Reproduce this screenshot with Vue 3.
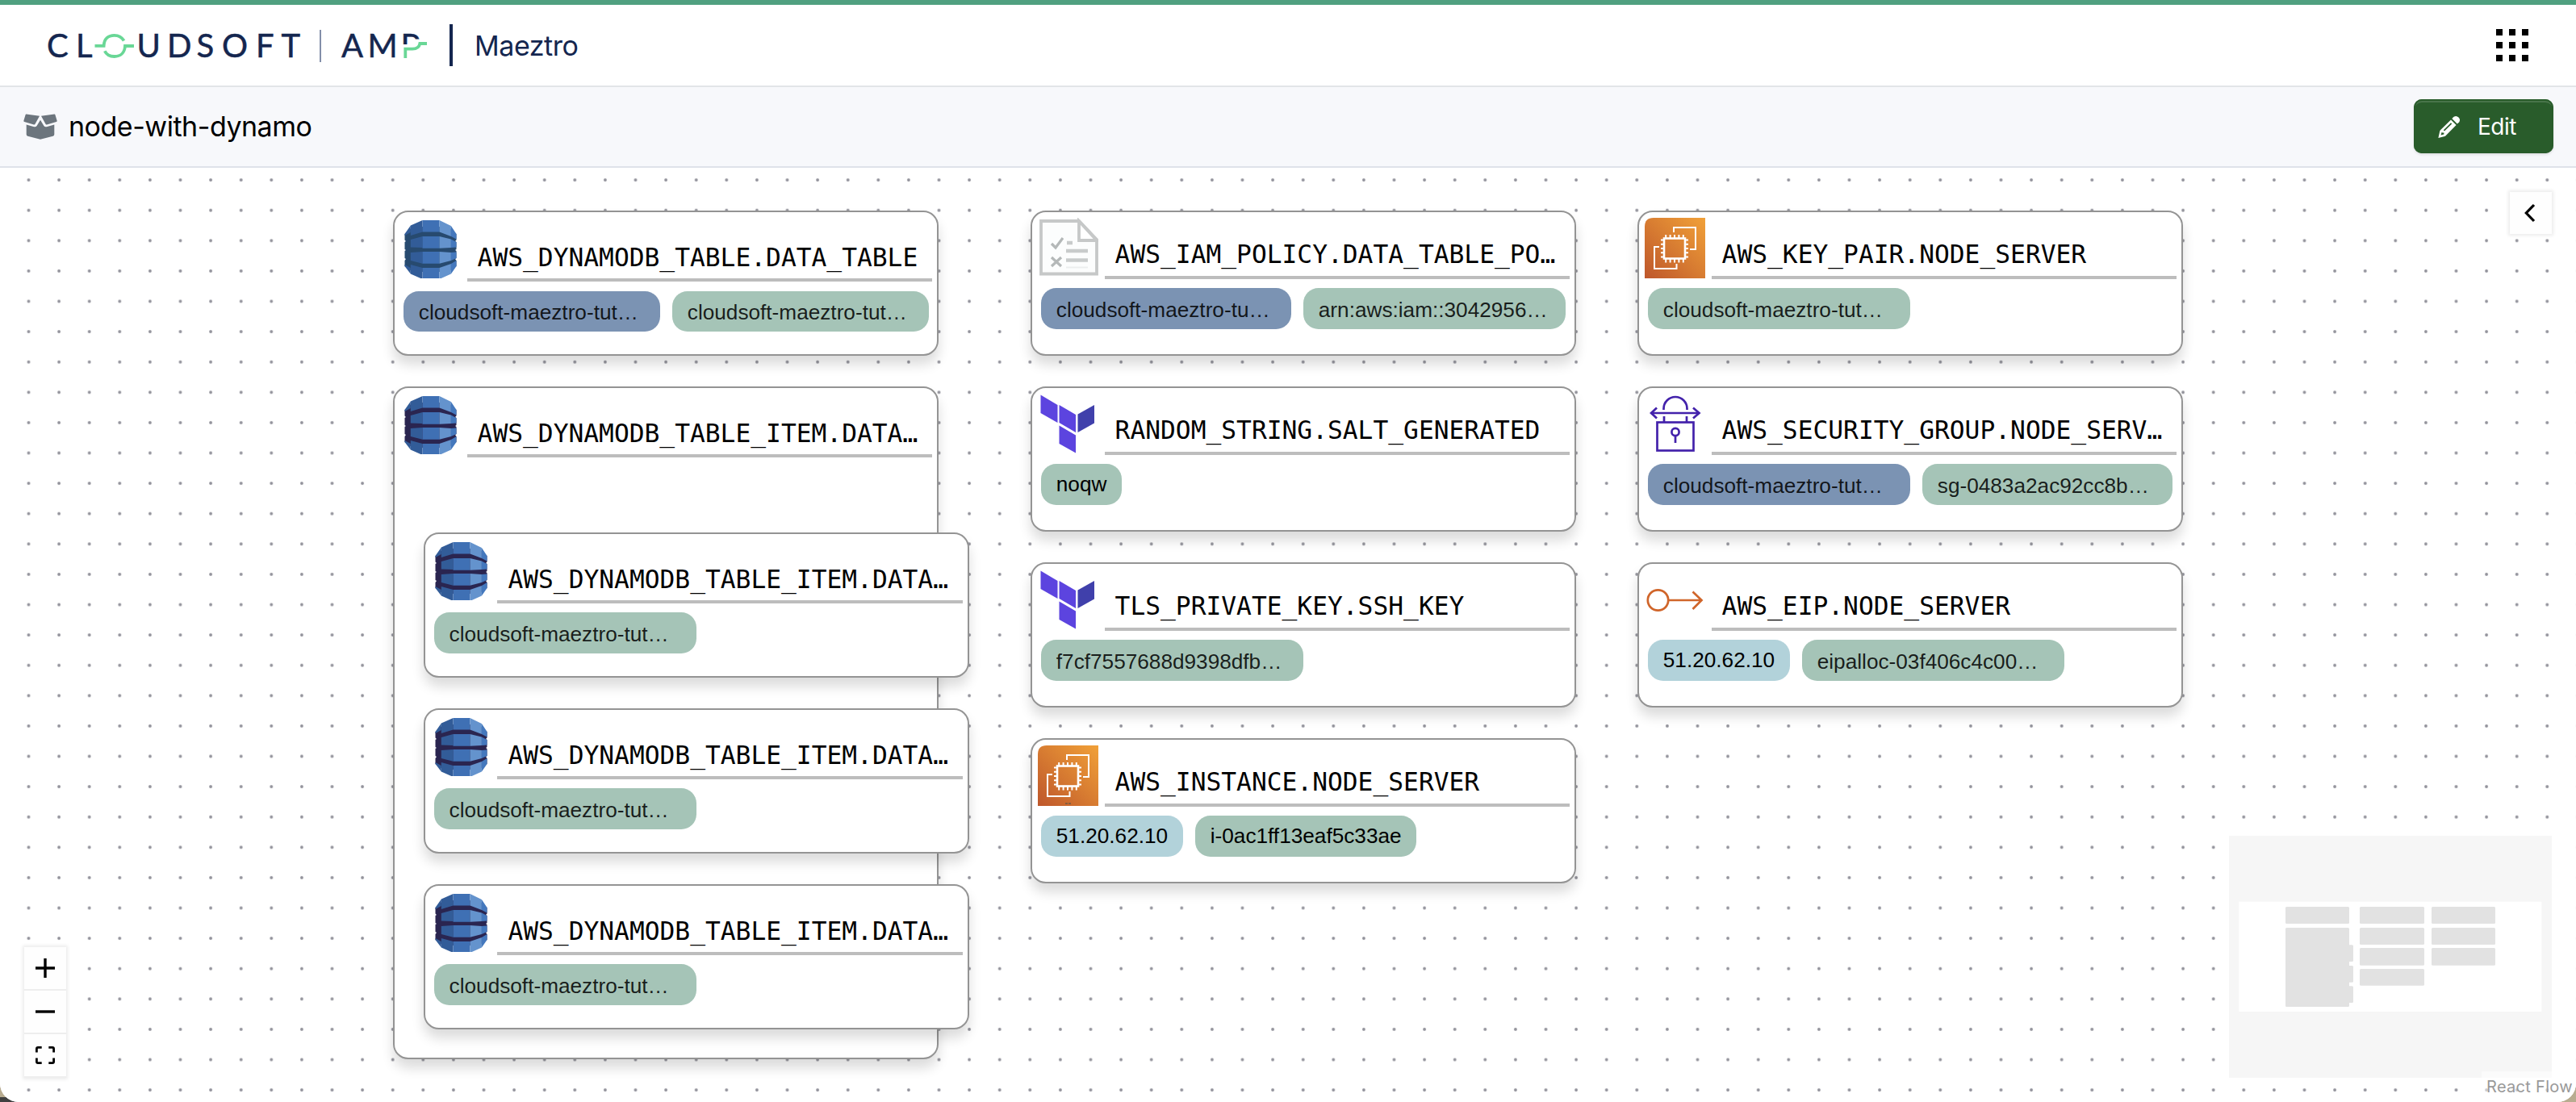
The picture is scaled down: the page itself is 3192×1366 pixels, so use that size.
<script setup>
const nodes = [
  { id: 'table', x: 487, y: 53, icon: 'dynamo', dark: '#274a6f', low: true, title: 'AWS_DYNAMODB_TABLE.DATA_TABLE',
    pills: [{ t: 'cloudsoft-maeztro-tut…', c: 'blue', w: 318, cut: true }, { t: 'cloudsoft-maeztro-tut…', c: 'green', w: 317.5, cut: true }] },
  { id: 'items', x: 487, y: 271, h: 834, icon: 'dynamo', dark: '#2a2550', low: true, title: 'AWS_DYNAMODB_TABLE_ITEM.DATA…', pills: [] },
  { id: 'item1', x: 524.8, y: 451.5, icon: 'dynamo', dark: '#2a2550', low: true, title: 'AWS_DYNAMODB_TABLE_ITEM.DATA…',
    pills: [{ t: 'cloudsoft-maeztro-tut…', c: 'green', w: 325, cut: true }] },
  { id: 'item2', x: 524.8, y: 669.5, icon: 'dynamo', dark: '#2a2550', low: true, title: 'AWS_DYNAMODB_TABLE_ITEM.DATA…',
    pills: [{ t: 'cloudsoft-maeztro-tut…', c: 'green', w: 325, cut: true }] },
  { id: 'item3', x: 524.8, y: 887.5, icon: 'dynamo', dark: '#2a2550', low: true, title: 'AWS_DYNAMODB_TABLE_ITEM.DATA…',
    pills: [{ t: 'cloudsoft-maeztro-tut…', c: 'green', w: 325, cut: true }] },
  { id: 'policy', x: 1277, y: 53, icon: 'policy', title: 'AWS_IAM_POLICY.DATA_TABLE_PO…',
    pills: [{ t: 'cloudsoft-maeztro-tu…', c: 'blue', w: 310, cut: true }, { t: 'arn:aws:iam::3042956…', c: 'green', w: 325, cut: true }] },
  { id: 'random', x: 1277, y: 271, icon: 'terraform', title: 'RANDOM_STRING.SALT_GENERATED', pills: [{ t: 'noqw', c: 'green' }] },
  { id: 'tls', x: 1277, y: 489, icon: 'terraform', title: 'TLS_PRIVATE_KEY.SSH_KEY',
    pills: [{ t: 'f7cf7557688d9398dfb…', c: 'green', w: 325, cut: true }] },
  { id: 'instance', x: 1277, y: 707, icon: 'ec2', title: 'AWS_INSTANCE.NODE_SERVER',
    pills: [{ t: '51.20.62.10', c: 'sky' }, { t: 'i-0ac1ff13eaf5c33ae', c: 'green' }] },
  { id: 'keypair', x: 2029, y: 53, icon: 'ec2', title: 'AWS_KEY_PAIR.NODE_SERVER',
    pills: [{ t: 'cloudsoft-maeztro-tut…', c: 'green', w: 325, cut: true }] },
  { id: 'secgroup', x: 2029, y: 271, icon: 'lock', title: 'AWS_SECURITY_GROUP.NODE_SERV…',
    pills: [{ t: 'cloudsoft-maeztro-tut…', c: 'blue', w: 325, cut: true }, { t: 'sg-0483a2ac92cc8b…', c: 'green', w: 310, cut: true }] },
  { id: 'eip', x: 2029, y: 489, icon: 'eip', title: 'AWS_EIP.NODE_SERVER',
    pills: [{ t: '51.20.62.10', c: 'sky' }, { t: 'eipalloc-03f406c4c00…', c: 'green', w: 325, cut: true }] },
]

const miniNodes = [
  [70, 88, 79, 21], [70, 114, 79, 98], [75, 135.3, 79, 20.7], [75, 161, 79, 20.7], [75, 186.3, 79, 20.7],
  [162, 88, 80, 21], [162, 114, 80, 21], [162, 139, 80, 21.7], [162, 165, 80, 20.7],
  [251, 88, 79, 21], [251, 114, 79, 21], [251, 139, 79, 21.7],
]
</script>

<template>
  <div class="window">
    <div class="app">
      <header class="topbar">
        <svg class="logo" width="504" height="60" viewBox="50 26 504 60">
          <defs>
            <clipPath id="p-top"><path d="M498 38H524V48.500H506V55H498Z" /></clipPath>
          </defs>
          <g fill="#14264f" stroke="#14264f" stroke-width=".5" font-family="Lato, sans-serif" font-size="40">
            <text y="71.3" x="58 94">CL</text>
            <text y="71.3" x="169.500 207 243.500 275 317 348.500">UDSOFT</text>
            <text y="71.3" x="423 455.500">AM</text>
            <text y="71.3" x="496.500" clip-path="url(#p-top)">P</text>
          </g>
          <g fill="none" stroke="#69d796" stroke-width="3.800">
            <path d="M117.500 56.800H128.600C129 48 134.500 43.800 141.700 43.800C147 43.800 151 46 153.600 50.500" />
            <path d="M166 57H155C154.500 65.500 149 70 141.700 70C136 70 131.800 67.500 129.800 63.200" />
            <path d="M502.300 72V60.700H511C517 60.700 519.500 58.500 520.300 54H529" />
          </g>
          <path d="M397 37V77" stroke="#7583a0" stroke-width="1.800" />
        </svg>
        <div class="brand-rule"></div>
        <span class="brand">Maeztro</span>
        <svg class="apps" width="40" height="40" viewBox="0 0 40 40">
          <path d="M0 0h8v8H0zM16 0h8v8h-8zM32 0h8v8h-8zM0 16h8v8H0zM16 16h8v8h-8zM32 16h8v8h-8zM0 32h8v8H0zM16 32h8v8h-8zM32 32h8v8h-8z" />
        </svg>
      </header>

      <div class="subbar">
        <svg class="box" width="42" height="32" viewBox="0 0 42 32" fill="#6c757d">
          <path d="M3.500 .5L20 2.700L14.500 12.800Q14 13.700 13 13.400L1.200 10Q0 9.600 .4 8.400L2.600 1.200Q2.900 .4 3.500 .5Z" />
          <path d="M38.500 .5L22 2.700L27.500 12.800Q28 13.700 29 13.400L40.800 10Q42 9.600 41.600 8.400L39.400 1.200Q39.100 .4 38.500 .5Z" />
          <path d="M3.700 13.500L13.300 16.200Q15.400 16.700 16.600 14.900L21 7.700L25.400 14.900Q26.600 16.700 28.700 16.200L38.300 13.500V25.500Q38.300 27.300 36.600 27.800L22 31.500Q21 31.800 20 31.500L5.400 27.800Q3.700 27.300 3.700 25.500Z" />
        </svg>
        <span class="doc-title">node-with-dynamo</span>
        <button class="edit">
          <svg width="28" height="28" viewBox="0 0 28 28" fill="#fff">
            <path d="M19.600 1.800a4.800 4.800 0 0 1 6.600 6.600l-2.400 2.200-6.500-6.500Z" />
            <path fill-rule="evenodd" d="M16 5.400l6.600 6.600L9.500 25.200Q9 25.700 8.300 25.900L.4 28L2.200 19.700Q2.400 18.900 3 18.300ZM16 9.200L6.800 18.300L8 19.500L17.200 10.400ZM4.700 20.700L3.500 24.600L7.400 23.600V21.500H5.600Z" />
          </svg>
          <span>Edit</span>
        </button>
      </div>

      <main class="canvas">
        <svg class="dots" width="100%" height="100%">
          <defs>
            <pattern id="grid" x="16.700" y="-3.700" width="37.600" height="37.600" patternUnits="userSpaceOnUse">
              <circle cx="18.800" cy="18.800" r="1.900" fill="#91919a" />
            </pattern>
          </defs>
          <rect width="100%" height="100%" fill="url(#grid)" />
        </svg>

        <article v-for="n in nodes" :key="n.id" class="node" :class="{ low: n.low }"
          :style="{ left: n.x + 'px', top: n.y + 'px', height: (n.h || 180) + 'px' }">
          <div class="head">
            <svg class="icon" width="75" height="75" viewBox="0 0 75 75">
              <g v-if="n.icon === 'dynamo'" transform="translate(5.500 3)">
                <path :fill="n.dark" d="M0 17L10 8H54L64 17V24.500L62.500 26L64 27V36L62.500 37L64 38V47L62.500 48L64 50V57L54 64H10L0 57V50L1.500 48L0 47V38L1.500 37L0 36V27L1.500 26L0 24.500Z" />
                <path fill="#325c98" d="M22 0V14.500L7.300 19V6.500ZM7.300 24L22 20V34L7.300 33.500ZM7.300 40L22 39V53.700L7.300 50ZM7.300 55L22 59V73L7.300 66.500Z" />
                <path fill="#3f70b4" d="M22 0H43V14.500H22ZM22 20H43V34.700H22ZM22 39H43V53.700H22ZM22 59H43V73H22Z" />
                <path fill="#6493cd" d="M43 0L57.400 7V20L43 14.500ZM43 20L57.400 23.500V34L43 34.700ZM43 39L57.400 40V50L43 53.700ZM43 59L57.400 54V66.500L43 73Z" />
                <path fill="#4478bd" d="M57.400 7L64 17V23.500L57.400 20ZM57.400 23.500L64 27V33.500L57.400 34ZM57.400 40L64 39.500V47L57.400 50ZM57.400 54L64 50V57L57.400 66.500Z" />
                <path fill="#325c98" d="M7.300 6.500L0 17V19L7.300 15ZM7.300 66.500L0 57V55L7.300 59Z" />
              </g>

              <g v-else-if="n.icon === 'policy'" fill="none" stroke="#c6c8c8" stroke-width="3.800">
                <path fill="#fcfdfd" d="M4 4H51L73 27V69.500H4Z" />
                <path fill="#fff" d="M51 4V28H73Z" />
                <path d="M17 32L22 37L31 25M17 49L29 60M29 49L17 60" stroke="#b4b8b8" stroke-width="3.200" />
                <path d="M36 31H43M35 41H62M35 52.500H62" stroke-width="4.400" stroke="#c8cbcb" />
                <path d="M35 61.500H62" stroke="#eceeee" stroke-width="2" />
              </g>

              <g v-else-if="n.icon === 'terraform'" transform="translate(3.500 1.500)">
                <path fill="#5c44df" d="M0 0L21 12.500V34.500L0 22.500ZM23 12.500L43.500 24.500V46.500L23 34.500ZM23 38L43.500 50V72L23 60.500Z" />
                <path fill="#4040ab" d="M46 24L66.500 12.500V35L46 46.500Z" />
              </g>

              <g v-else-if="n.icon === 'ec2'">
                <linearGradient id="amber" x1="0" y1="1" x2="1" y2="0">
                  <stop offset="0" stop-color="#be572b" /><stop offset="1" stop-color="#f1a138" />
                </linearGradient>
                <path fill="url(#amber)" d="M0 75V11Q0 0 11 0H75V75Z" />
                <g fill="none" stroke="#fff" stroke-width="2">
                  <rect x="24" y="25.500" width="26" height="25" stroke-width="2.600" />
                  <path d="M26.200 21V26M31.600 21V26M37 21V26M42.400 21V26M47.800 21V26M26.200 50V55.500M31.600 50V55.500M37 50V55.500M42.400 50V55.500M47.800 50V55.500" />
                  <path d="M20 27.500H24M20 32.800H24M20 38H24M20 43.300H24M20 48.500H24M50 27.500H54M50 32.800H54M50 38H54M50 43.300H54M50 48.500H54" />
                  <path d="M36 18V12H63V39H56M18 36H12V63H39.500V57" />
                </g>
                <path v-if="n.id === 'instance'" d="M34 72H37M38 72H41" stroke="#6d5a44" stroke-width="1.500" />
              </g>

              <g v-else-if="n.icon === 'lock'" fill="none" stroke="#4322ab" stroke-width="2.700">
                <rect x="15.500" y="35.500" width="45" height="35" />
                <path d="M23.500 20V18.500A14.500 14.500 0 0 1 52.500 18.500V20M24 28V35M52 28V35" />
                <path d="M8 24H68M15 17.500L8 24L15 30.500M60 17.500L67.500 24L60 30.500" />
                <circle cx="38" cy="47.500" r="4.600" />
                <path d="M38 52V61" />
              </g>

              <g v-else fill="none" stroke="#d0652a" stroke-width="2.700">
                <circle cx="16.500" cy="38" r="12.700" />
                <path d="M29.500 38H70M59.500 27.500L70.500 38L59.500 49" />
              </g>
            </svg>
            <h2>{{ n.title }}</h2>
          </div>
          <div class="pills">
            <span v-for="(p, i) in n.pills" :key="i" class="pill" :class="[p.c, { cut: p.cut }]"
              :style="p.w ? { width: p.w + 'px' } : null">{{ p.t }}</span>
          </div>
        </article>

        <button class="panel-toggle">
          <svg width="16" height="24" viewBox="0 0 16 24" fill="none" stroke="#000" stroke-width="3.200">
            <path d="M13 2L3.300 12L13 22" />
          </svg>
        </button>

        <div class="controls">
          <button><svg width="24" height="24"><path d="M12 0V24M0 12H24" stroke="#000" stroke-width="3.400" /></svg></button>
          <button><svg width="24" height="24"><path d="M0 12H24" stroke="#000" stroke-width="3.400" /></svg></button>
          <button>
            <svg width="24" height="24" fill="none" stroke="#000" stroke-width="2.800">
              <path d="M1.400 8.500V4Q1.400 2.400 3 2.400H7.700M16.300 2.400H21Q22.600 2.400 22.600 4V8.500M22.600 15.500V20Q22.600 21.600 21 21.600H16.300M7.700 21.600H3Q1.400 21.600 1.400 20V15.500" />
            </svg>
          </button>
        </div>

        <svg class="minimap" width="400" height="300" viewBox="0 0 400 300">
          <rect width="400" height="300" fill="#f6f6f6" />
          <rect x="12.300" y="81.700" width="375" height="136.300" fill="#fff" />
          <rect v-for="(m, i) in miniNodes" :key="i" :x="m[0]" :y="m[1]" :width="m[2]" :height="m[3]" rx="1.500" fill="#e2e2e2" />
        </svg>

        <div class="attribution">React Flow</div>
      </main>
    </div>
  </div>
</template>

<style>
html, body { margin: 0; overflow: hidden; }
</style>

<style scoped>
* { box-sizing: border-box; }
button { border: 0; padding: 0; margin: 0; font: inherit; }
svg { display: block; flex: none; }

.window {
  width: 3192px;
  height: 1366px;
  background: linear-gradient(#b8ac90 1360px, transparent 1360px), linear-gradient(90deg, #404040 1600px, #b8ac90 1600px);
  font-family: Inter, "Liberation Sans", sans-serif;
}
.app {
  height: 100%;
  display: flex;
  flex-direction: column;
  background: #fff;
  border-radius: 0 0 23px 23px;
  overflow: hidden;
}

.topbar {
  height: 108px;
  flex: none;
  display: flex;
  align-items: center;
  border-top: 6px solid #50a080;
  border-bottom: 2px solid #e2e5e8;
  padding: 0 59px 0 50px;
}
.brand-rule { width: 4px; height: 52px; margin-left: 3px; background: #14264f; }
.brand { margin-left: 27px; font-size: 34px; letter-spacing: -.450px; color: #14264f; margin-top: 1px; }
.apps { margin-left: auto; }

.subbar {
  height: 100px;
  flex: none;
  display: flex;
  align-items: center;
  padding: 0 28px 1px 29px;
  background: #f7f8fb;
  border-bottom: 2px solid #dfe2ea;
}
.doc-title { margin: 0 0 1px 14px; font-size: 34px; letter-spacing: -.480px; color: #000; }
.edit {
  margin-left: auto;
  width: 173px;
  height: 67px;
  display: flex;
  align-items: center;
  padding-left: 30px;
  gap: 21px;
  border-radius: 10px;
  background: #295c2b;
  color: #fff;
  font-size: 28px;
  letter-spacing: -.500px;
  box-shadow: inset 0 0 0 2px #295c2b, inset 0 4px 0 rgba(255, 255, 255, .15), 0 2px 3px rgba(0, 0, 0, .1);
}

.canvas { position: relative; flex: 1; background: #fff; }
.dots { position: absolute; inset: 0; }

.node {
  position: absolute;
  width: 676px;
  border: 2px solid #949494;
  border-radius: 18.800px;
  background: #fff;
  box-shadow: 0 11px 15px rgba(0, 0, 0, .14);
  padding: 7px 6px 0 7px;
}
.head { display: flex; align-items: flex-start; gap: 7.600px; }
.head h2 {
  flex: 1;
  margin: 0;
  height: 75.500px;
  border-bottom: 4px solid #bdbdbd;
  padding: 25px 0 0 13px;
  font: 400 31.250px/40px "DejaVu Sans Mono", monospace;
  white-space: nowrap;
  color: #000;
}
.low .head h2 { height: 79px; padding-top: 29px; }
.pills { display: flex; gap: 15px; padding: 11.800px 0 0 4px; }
.pill {
  flex: none;
  height: 50.700px;
  padding: 0 18.800px;
  border-radius: 18.800px;
  font: 26.200px/50.700px "Liberation Sans", Arial, sans-serif;
  color: #000;
  white-space: nowrap;
  overflow: hidden;
}
.cut { padding-top: 1.500px; color: rgba(0, 0, 0, .86); }
.blue { background: #7b93b3; }
.green { background: #a5c4b7; }
.sky { background: #b2d2da; }

.panel-toggle {
  position: absolute;
  right: 30px;
  top: 30px;
  width: 52px;
  height: 52px;
  display: flex;
  align-items: center;
  justify-content: center;
  padding-right: 3px;
  background: #fefefe;
  box-shadow: 0 0 4px 2px rgba(0, 0, 0, .08);
}
.controls {
  position: absolute;
  left: 30px;
  bottom: 30px;
  display: flex;
  flex-direction: column;
  box-shadow: 0 0 4px 2px rgba(0, 0, 0, .08);
}
.controls button {
  width: 52px;
  height: 54px;
  display: flex;
  align-items: center;
  justify-content: center;
  background: #fefefe;
  border-bottom: 2px solid #eee;
}
.minimap { position: absolute; right: 30px; bottom: 30px; }
.attribution {
  position: absolute;
  right: 0;
  bottom: 0;
  width: 117px;
  height: 38px;
  padding-left: 6px;
  background: rgba(255, 255, 255, .5);
  font-size: 20px;
  line-height: 38px;
  letter-spacing: .3px;
  color: #999;
}
</style>
